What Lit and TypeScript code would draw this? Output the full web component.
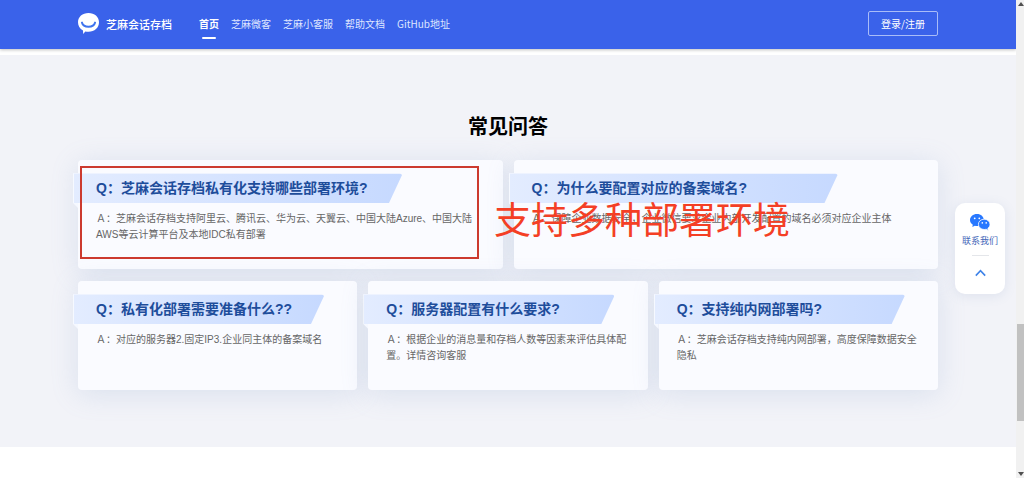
import { LitElement, html, css } from "lit";
import { customElement, property } from "lit/decorators.js";

@customElement("faq-card")
class FaqCard extends LitElement {
  @property() question = "";
  @property() answer = "";

  static styles = css`
    :host {
      display: block;
      box-sizing: border-box;
      min-height: 109px;
      padding: 13px 18px 16px 0;
      border-radius: 4px;
      background: #fafbff;
      box-shadow: 0 4px 28px rgba(120, 150, 200, 0.2);
    }
    .ribbon {
      position: relative;
      width: var(--ribbon, 90%);
      margin-left: -5px;
    }
    .ribbon::after {
      content: "";
      position: absolute;
      left: 0;
      top: 100%;
      width: 5px;
      height: 5px;
      background: #f5f8ff;
      clip-path: polygon(0 0, 100% 0, 100% 100%);
    }
    .question {
      margin: 0;
      box-sizing: border-box;
      padding-left: 22px;
      border-left: 1px solid #f6f9ff;
      border-top: 1px solid #eef3ff;
      background: linear-gradient(90deg, #e3ecff, #c6d9ff);
      clip-path: polygon(0 0, calc(100% - 2px) 0, 100% 2px, calc(100% - 13px) 100%, 0 100%);
      color: #1e4d9b;
      font-size: 14px;
      line-height: 29px;
      font-weight: 700;
      white-space: nowrap;
    }
    .answer {
      margin: 8px 0 0 18px;
      color: #666;
      font-size: 10px;
      line-height: 16px;
    }
  `;

  render() {
    return html`
      <div class="ribbon"><h3 class="question">${this.question}</h3></div>
      <p class="answer">${this.answer}</p>
    `;
  }
}

const NAV = ["首页", "芝麻微客", "芝麻小客服", "帮助文档", "GitHub地址"];

const WIDE = [
  {
    q: "Q：芝麻会话存档私有化支持哪些部署环境?",
    a: "Ａ：芝麻会话存档支持阿里云、腾讯云、华为云、天翼云、中国大陆Azure、中国大陆AWS等云计算平台及本地IDC私有部署",
  },
  {
    q: "Q：为什么要配置对应的备案域名?",
    a: "Ａ：保障企业数据安全，企业微信要求企业内部开发配置的域名必须对应企业主体",
  },
];

const NARROW = [
  { q: "Q：私有化部署需要准备什么??", a: "Ａ：对应的服务器2.固定IP3.企业同主体的备案域名" },
  { q: "Q：服务器配置有什么要求?", a: "Ａ：根据企业的消息量和存档人数等因素来评估具体配置。详情咨询客服" },
  { q: "Q：支持纯内网部署吗?", a: "Ａ：芝麻会话存档支持纯内网部署，高度保障数据安全隐私" },
];

@customElement("app-root")
class AppRoot extends LitElement {
  static styles = css`
    :host {
      display: flex;
      position: relative;
      min-height: 100vh;
      background: #fff;
      font-family: "Liberation Sans", "Noto Sans CJK SC", sans-serif;
    }
    .page {
      flex: 1;
      min-width: 0;
    }
    .inner {
      width: 100%;
      max-width: 860px;
      margin: 0 auto;
    }
    .header {
      background: #3a62ea;
      box-shadow: 0 1px 3px rgba(0, 0, 0, 0.25);
      font-family: "Noto Sans CJK SC", sans-serif;
    }
    .bar {
      display: flex;
      align-items: center;
      box-sizing: border-box;
      height: 49px;
      padding-bottom: 2px;
    }
    .brand {
      display: flex;
      align-items: center;
      gap: 7px;
      color: #fff;
      font-size: 11px;
      font-weight: 500;
      text-decoration: none;
    }
    .nav {
      display: flex;
      gap: 12px;
      flex: 1;
      margin-left: 27px;
    }
    .link {
      color: #dfe6ff;
      font-size: 10px;
      line-height: 24px;
      text-decoration: none;
      position: relative;
    }
    .link.active {
      color: #fff;
      font-weight: 700;
    }
    .link.active::after {
      content: "";
      position: absolute;
      left: 3px;
      right: 3px;
      bottom: -3px;
      height: 2px;
      border-radius: 1px;
      background: #fff;
    }
    .login {
      box-sizing: border-box;
      width: 70px;
      height: 25px;
      padding: 0;
      border: 1px solid #a9bcf8;
      border-radius: 2px;
      background: transparent;
      color: #fff;
      font: 10px "Noto Sans CJK SC", sans-serif;
    }
    .faq {
      margin-top: 6px;
      padding: 57px 0;
      background: #f2f3f8;
    }
    .title {
      margin: 0 0 18px;
      text-align: center;
      color: #000;
      font-size: 20px;
      line-height: 30px;
      font-weight: 700;
    }
    .rows {
      display: grid;
      gap: 12px;
    }
    .row {
      display: grid;
      gap: 11px;
    }
    .two {
      grid-template-columns: repeat(2, 1fr);
      --ribbon: 329px;
    }
    .three {
      grid-template-columns: repeat(3, 1fr);
      --ribbon: 251px;
    }
    .mark {
      position: absolute;
      left: 80px;
      top: 166px;
      box-sizing: border-box;
      width: 399px;
      height: 93px;
      border: 2px solid #cc3a2f;
    }
    .note {
      position: absolute;
      left: 494px;
      top: 197px;
      margin: 0;
      color: #f43f25;
      font-size: 37px;
      line-height: 50px;
      white-space: nowrap;
    }
    .dock {
      position: absolute;
      right: 19px;
      top: 203px;
      box-sizing: border-box;
      width: 50px;
      height: 91px;
      padding-top: 11px;
      border-radius: 10px;
      background: #fff;
      box-shadow: 0 2px 12px rgba(100, 130, 180, 0.14);
      display: flex;
      flex-direction: column;
      align-items: center;
    }
    .contact,
    .up {
      display: flex;
      flex-direction: column;
      align-items: center;
      padding: 0;
      border: 0;
      background: none;
      color: #3f66b8;
      font: 9px/16px "Noto Sans CJK SC", sans-serif;
      white-space: nowrap;
    }
    .contact {
      gap: 2px;
    }
    .rule {
      width: 17px;
      height: 1px;
      margin: 6px 0 13px;
      background: #e4e6ea;
    }
    .scroll {
      width: 8px;
      background: #f1f1f1;
      display: grid;
      grid-template-rows: 8px 309fr 97px 48fr 8px;
      justify-items: end;
    }
    .thumb {
      grid-row: 3;
      width: 7px;
      background: #c1c1c1;
    }
    .arrow {
      align-self: center;
      width: 6px;
      height: 4px;
      background: #505050;
      clip-path: polygon(50% 0, 100% 100%, 0 100%);
    }
    .arrow.down {
      grid-row: 5;
      clip-path: polygon(0 0, 100% 0, 50% 100%);
    }
  `;

  render() {
    return html`
      <div class="page">
        <header class="header">
          <div class="inner bar">
            <a class="brand" href="#">
              <svg width="21" height="21" viewBox="0 0 21 21" aria-hidden="true">
                <path fill="#fff" d="M10.5 0C16.5 0 21 3.8 21 9.3S16.5 18.700 10.500 18.700Q8.800 18.700 7.300 18.400L5.200 21L5 17.500C1.800 15.800 0 12.900 0 9.300C0 3.800 4.500 0 10.500 0Z" />
                <path fill="none" stroke="#3f74ee" stroke-width="2" stroke-linecap="round" d="M3.900 9.600C4.600 12.300 7.200 13.800 10.500 13.800S16.400 12.300 17.100 9.600" />
              </svg>
              <span>芝麻会话存档</span>
            </a>
            <nav class="nav">
              ${NAV.map((n, i) => html`<a class="link ${i === 0 ? "active" : ""}" href="#">${n}</a>`)}
            </nav>
            <button class="login">登录/注册</button>
          </div>
        </header>
        <main class="faq">
          <div class="inner">
            <h2 class="title">常见问答</h2>
            <div class="rows">
              <div class="row two">
                ${WIDE.map((c) => html`<faq-card .question=${c.q} .answer=${c.a}></faq-card>`)}
              </div>
              <div class="row three">
                ${NARROW.map((c) => html`<faq-card .question=${c.q} .answer=${c.a}></faq-card>`)}
              </div>
            </div>
          </div>
        </main>
      </div>
      <div class="scroll" aria-hidden="true">
        <i class="arrow"></i><i class="thumb"></i><i class="arrow down"></i>
      </div>
      <div class="mark"></div>
      <p class="note">支持多种部署环境</p>
      <aside class="dock">
        <button class="contact">
          <svg width="20" height="17" viewBox="0 0 20 17" aria-hidden="true">
            <path fill="#2878ff" d="M7 0C11 0 13.800 2.700 13.800 6S11 12 7 12Q5.900 12 4.900 11.700L2.300 13L2.800 10.700C1.100 9.600 0 7.900 0 6C0 2.700 3 0 7 0Z" />
            <path fill="#2878ff" stroke="#fff" stroke-width=".8" d="M14.200 5.200C17.500 5.200 20 7.500 20 10.300C20 11.900 19.200 13.300 17.900 14.200L18.300 16.400L16.100 15.200Q15.200 15.500 14.200 15.500C10.900 15.500 8.400 13.200 8.400 10.300S10.900 5.200 14.200 5.200Z" />
            <g fill="#fff">
              <circle cx="4.700" cy="4.300" r=".9" />
              <circle cx="9.300" cy="4.300" r=".9" />
              <circle cx="12.300" cy="8.900" r=".8" />
              <circle cx="16.200" cy="8.900" r=".8" />
            </g>
          </svg>
          <span>联系我们</span>
        </button>
        <span class="rule"></span>
        <button class="up" aria-label="返回顶部">
          <svg width="11" height="8" viewBox="0 0 11 8" aria-hidden="true">
            <path fill="none" stroke="#3f83e8" stroke-width="1.600" d="M.8 6.600L5.500 1.700L10.200 6.600" />
          </svg>
        </button>
      </aside>
    `;
  }
}
